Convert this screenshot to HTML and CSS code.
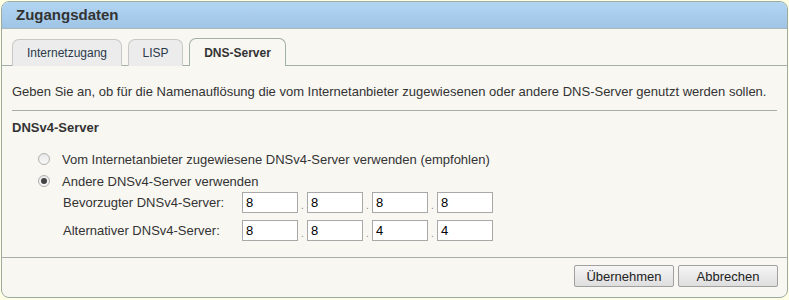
FILE: index.html
```html
<!DOCTYPE html>
<html lang="de">
<head>
  <meta charset="UTF-8">
  <title>Zugangsdaten</title>
  <link rel="stylesheet" href="styles.css">
</head>
<body>
  <div class="panel">
    <div class="panel-head">Zugangsdaten</div>
    <div class="tabs">
      <div class="tab">Internetzugang</div>
      <div class="tab">LISP</div>
      <div class="tab active">DNS-Server</div>
    </div>
    <div class="panel-body">
      <p class="intro">Geben Sie an, ob für die Namenauflösung die vom Internetanbieter zugewiesenen oder andere DNS-Server genutzt werden sollen.</p>
      <h2>DNSv4-Server</h2>
      <label class="radio"><span class="dot"></span>Vom Internetanbieter zugewiesene DNSv4-Server verwenden (empfohlen)</label>
      <label class="radio"><span class="dot checked"></span>Andere DNSv4-Server verwenden</label>
      <div class="ip-row">
        <span class="ip-label">Bevorzugter DNSv4-Server:</span>
        <span class="ip"><span class="box">8</span><i>.</i><span class="box">8</span><i>.</i><span class="box">8</span><i>.</i><span class="box">8</span></span>
      </div>
      <div class="ip-row">
        <span class="ip-label">Alternativer DNSv4-Server:</span>
        <span class="ip"><span class="box">8</span><i>.</i><span class="box">8</span><i>.</i><span class="box">4</span><i>.</i><span class="box">4</span></span>
      </div>
    </div>
    <div class="panel-foot">
      <button>Übernehmen</button>
      <button>Abbrechen</button>
    </div>
  </div>
</body>
</html>
```

FILE: styles.css
```css
* {
  box-sizing: border-box;
}

html, body {
  margin: 0;
  padding: 0;
  background: #ffffe6;
}

body {
  padding: 1px 1px 2px 1px;
  font-family: "Liberation Sans", Arial, sans-serif;
  font-size: 13px;
  color: #333;
}

.panel {
  height: 297px;
  border: 1px solid #9eaba3;
  border-radius: 8px;
  background: #f8f7f2;
  display: flex;
  flex-direction: column;
  overflow: hidden;
}

.panel-head {
  height: 27px;
  padding: 4px 14px 0;
  background: linear-gradient(#b2d5f2, #9fc5e6);
  border-bottom: 1px solid #a9b8bc;
  font-size: 15px;
  font-weight: bold;
  color: #333;
}

.tabs {
  display: flex;
  gap: 6px;
  padding: 0 0 0 10px;
  border-bottom: 1px solid #a2aea8;
  height: 37px;
  align-items: flex-end;
}

.tab {
  height: 27px;
  padding: 6px 0 0;
  text-align: center;
  margin-bottom: -1px;
  border: 1px solid #c6c9c6;
  border-bottom: none;
  border-radius: 7px 7px 0 0;
  background: #ececec;
  color: #2b3a4a;
  font-size: 12px;
}

.tab:nth-child(1) {
  width: 110px;
}

.tab:nth-child(2) {
  width: 55px;
}

.tab.active {
  width: 97px;
  height: 28px;
  padding-top: 7px;
  background: #f8f7f2;
  border-color: #a2aea8;
  font-weight: bold;
  color: #333;
}

.panel-body {
  flex: 1;
  padding: 0 10px;
}

.intro {
  margin: 18px 0 0;
  padding-bottom: 10px;
  border-bottom: 1px solid #a9aeab;
  line-height: 16px;
}

h2 {
  font-size: 13px;
  margin: 9px 0 12px;
  line-height: 16px;
}

.radio {
  display: flex;
  align-items: center;
  height: 22px;
  padding-left: 26px;
}

.dot {
  width: 12px;
  height: 12px;
  border-radius: 50%;
  border: 1px solid #b0b0b0;
  background: linear-gradient(#e8e8e8, #f8f8f8);
  margin-right: 12px;
  position: relative;
}

.dot.checked::after {
  content: "";
  position: absolute;
  left: 2px;
  top: 2px;
  width: 6px;
  height: 6px;
  border-radius: 50%;
  background: #444;
}

.ip-row {
  display: flex;
  align-items: center;
  padding-left: 51px;
  margin-top: 7px;
}

.radio + .ip-row {
  margin-top: 0;
}

.ip-label {
  width: 179px;
}

.ip {
  display: flex;
  align-items: center;
}

.box {
  width: 56px;
  height: 21px;
  border: 1px solid #a8a8a8;
  background: #fff;
  color: #000;
  padding: 2px 0 0 3px;
  font-size: 13px;
}

.ip i {
  font-style: normal;
  width: 9px;
  text-align: center;
  font-size: 10px;
  color: #888;
  padding-top: 6px;
}

.panel-foot {
  border-top: 1px solid #a9aeab;
  height: 40px;
  display: flex;
  justify-content: flex-end;
  gap: 4px;
  padding: 7px 9px 0;
}

button {
  width: 100px;
  height: 22px;
  font-family: "Liberation Sans", Arial, sans-serif;
  font-size: 13px;
  color: #222;
  border: 1px solid #a0a0a0;
  border-radius: 2px;
  background: linear-gradient(#f6f6f6, #dedede);
  padding: 0;
}
```
